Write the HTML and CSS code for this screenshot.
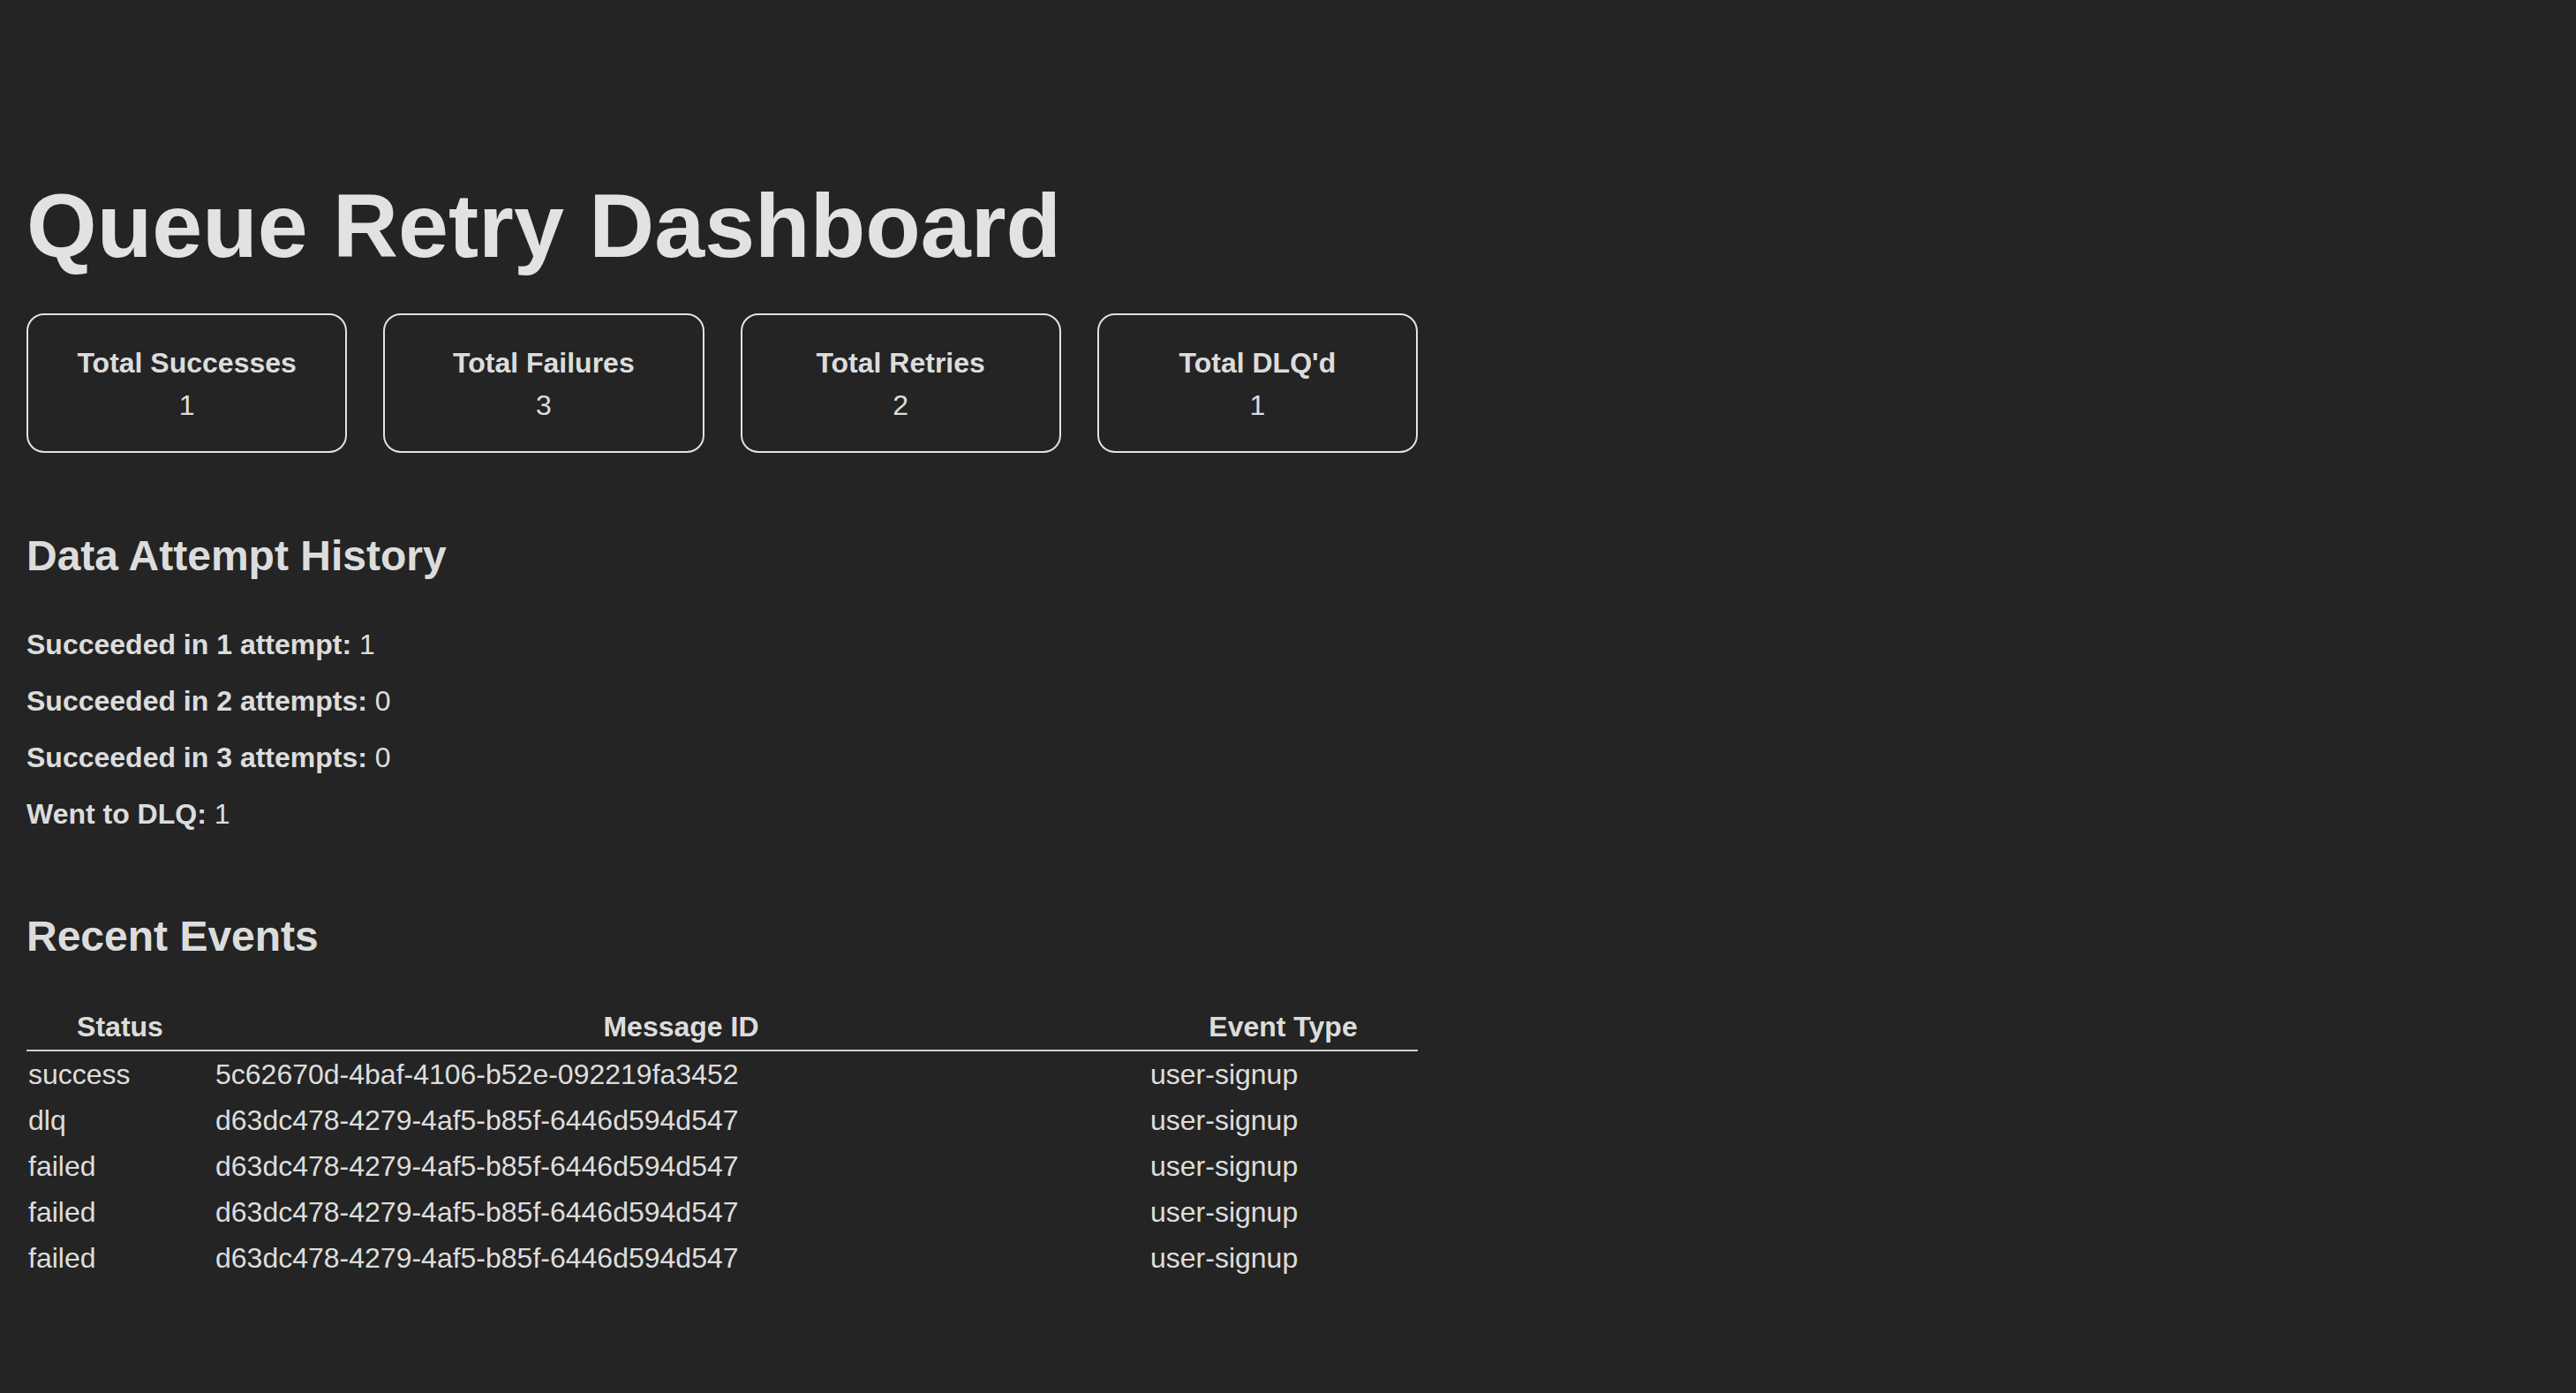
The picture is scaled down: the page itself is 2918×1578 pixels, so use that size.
FILE: index.html
```html
<!DOCTYPE html>
<html lang="en">
<head>
<meta charset="utf-8">
<title>Queue Retry Dashboard</title>
<link rel="stylesheet" href="styles.css">
</head>
<body>
<main class="dashboard">
  <h1 class="title">Queue Retry Dashboard</h1>

  <div class="stats">
    <div class="stat-card">
      <div class="stat-label">Total Successes</div>
      <div class="stat-value">1</div>
    </div>
    <div class="stat-card">
      <div class="stat-label">Total Failures</div>
      <div class="stat-value">3</div>
    </div>
    <div class="stat-card">
      <div class="stat-label">Total Retries</div>
      <div class="stat-value">2</div>
    </div>
    <div class="stat-card">
      <div class="stat-label">Total DLQ'd</div>
      <div class="stat-value">1</div>
    </div>
  </div>

  <section class="history">
    <h2 class="section-title">Data Attempt History</h2>
    <div class="history-list">
      <p class="history-item"><strong>Succeeded in 1 attempt:</strong> 1</p>
      <p class="history-item"><strong>Succeeded in 2 attempts:</strong> 0</p>
      <p class="history-item"><strong>Succeeded in 3 attempts:</strong> 0</p>
      <p class="history-item"><strong>Went to DLQ:</strong> 1</p>
    </div>
  </section>

  <section class="events">
    <h2 class="section-title events-title">Recent Events</h2>
    <table class="events-table">
      <colgroup>
        <col class="col-status">
        <col class="col-id">
        <col class="col-type">
      </colgroup>
      <thead>
        <tr><th>Status</th><th>Message ID</th><th>Event Type</th></tr>
      </thead>
      <tbody>
        <tr><td>success</td><td>5c62670d-4baf-4106-b52e-092219fa3452</td><td>user-signup</td></tr>
        <tr><td>dlq</td><td>d63dc478-4279-4af5-b85f-6446d594d547</td><td>user-signup</td></tr>
        <tr><td>failed</td><td>d63dc478-4279-4af5-b85f-6446d594d547</td><td>user-signup</td></tr>
        <tr><td>failed</td><td>d63dc478-4279-4af5-b85f-6446d594d547</td><td>user-signup</td></tr>
        <tr><td>failed</td><td>d63dc478-4279-4af5-b85f-6446d594d547</td><td>user-signup</td></tr>
      </tbody>
    </table>
  </section>
</main>
</body>
</html>
```

FILE: styles.css
```css
html, body {
  margin: 0;
  padding: 0;
}

body {
  background: #242424;
  color: rgba(255, 255, 255, 0.87);
  font-family: "Liberation Sans", Arial, Helvetica, sans-serif;
  font-size: 32px;
  line-height: 1.5;
  min-height: 100vh;
}

.dashboard {
  width: 1576px;
  padding: 200px 0 0 30px;
}

.title {
  margin: 0 0 42px;
  font-size: 102.4px;
  line-height: 1.1;
  font-weight: 700;
}

.stats {
  display: flex;
  gap: 41px;
  margin-bottom: 89px;
}

.stat-card {
  flex: 1 1 0;
  border: 2px solid #e2e2e2;
  border-radius: 20px;
  padding: 30px 0 28px;
  text-align: center;
}

.stat-label {
  font-weight: 700;
  line-height: 48px;
}

.stat-value {
  line-height: 48px;
}

.section-title {
  margin: 0 0 48px;
  font-size: 48px;
  line-height: 56px;
  font-weight: 700;
}

.history {
  margin-bottom: 87px;
}

.history-list {
  display: flex;
  flex-direction: column;
  gap: 16px;
}

.history-item {
  margin: 0;
  line-height: 48px;
}

.events-title {
  margin-bottom: 48px;
}

.events-table {
  width: 1576px;
  table-layout: fixed;
  border-collapse: collapse;
}

.col-status { width: 212px; }
.col-id { width: 1059px; }
.col-type { width: 305px; }

.events-table th,
.events-table td {
  padding: 2px;
  line-height: 48px;
  white-space: nowrap;
}

.events-table th {
  font-weight: 700;
  text-align: center;
  border-bottom: 2px solid #cfcfcf;
}

.events-table td {
  text-align: left;
}
```
